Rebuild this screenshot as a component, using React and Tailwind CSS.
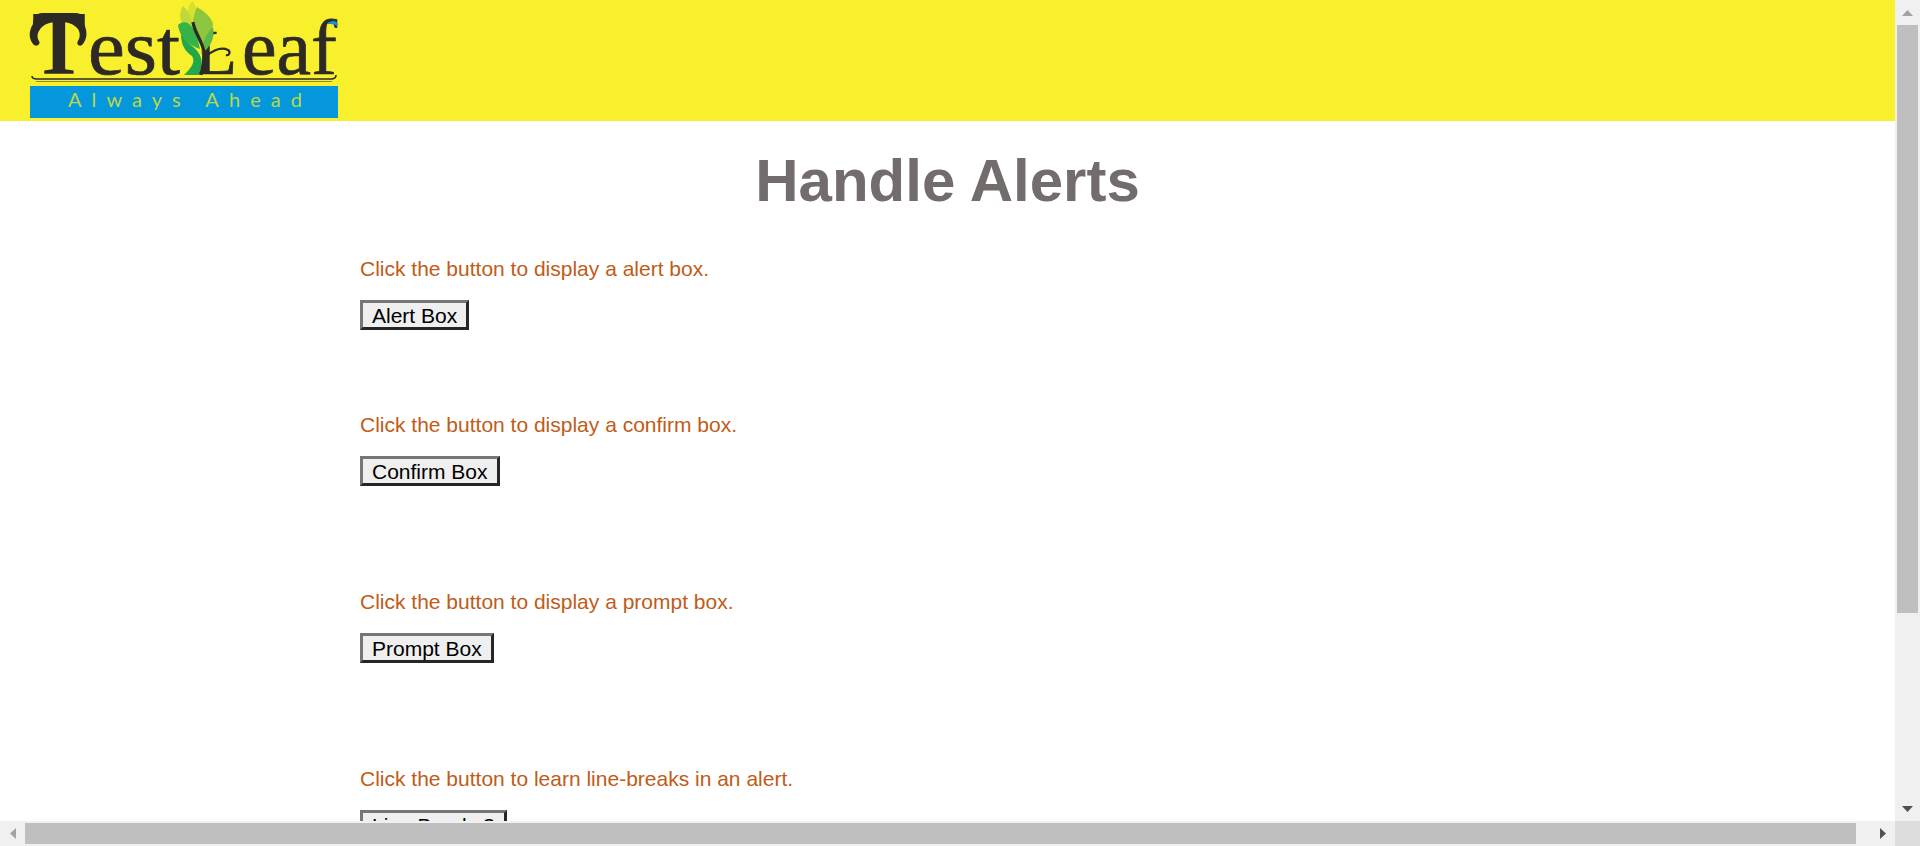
const sections = [
  { id: 'alert', text: 'Click the button to display a alert box.', label: 'Alert Box', gap: 'mb-[83px]' },
  { id: 'confirm', text: 'Click the button to display a confirm box.', label: 'Confirm Box', gap: 'mb-[104px]' },
  { id: 'prompt', text: 'Click the button to display a prompt box.', label: 'Prompt Box', gap: 'mb-[104px]' },
  { id: 'line', text: 'Click the button to learn line-breaks in an alert.', label: 'Line Breaks?', gap: 'mb-[83px]' },
];

function Logo() {
  return (
    <svg width="340" height="121" viewBox="0 0 340 121" className="block shrink-0 overflow-visible">
      {/* wordmark */}
      <g fontFamily="'Liberation Serif', serif" fill="#2d2a26">
        <text x="32" y="74" fontSize="90" textLength="54" lengthAdjust="spacingAndGlyphs" fontWeight="700">T</text>
        <text x="88" y="74" fontSize="78" textLength="92" lengthAdjust="spacingAndGlyphs" stroke="#2d2a26" strokeWidth="0.7">est</text>
        <text x="195" y="74" fontSize="64" textLength="42" lengthAdjust="spacingAndGlyphs" stroke="#2d2a26" strokeWidth="0.7">L</text>
        <text x="242" y="74" fontSize="78" textLength="95" lengthAdjust="spacingAndGlyphs" stroke="#2d2a26" strokeWidth="0.7">eaf</text>
      </g>
      {/* swashes on the T */}
      <path d="M42 13H76C82 13 84 18 84 24C88 32 87 40 82 45C79 47 76 44 78 41C81 36 80 30 76 27C72 23 66 22 60 22C52 22 46 23 42 27C38 31 36 36 39 41C41 44 37 47 34 45C29 40 28 32 33 24C33 18 36 13 42 13Z" fill="#2d2a26" />
      {/* leaf */}
      <path d="M193 1c-6 5-7 12-3 24l5 2c3-10 2-19-2-26z" fill="#d9e02f" />
      <path d="M183 6c-5 8-4 19 8 28 3-10 0-21-8-28z" fill="#bfd93a" />
      <path d="M197 7c7 4 15 11 16 17-1 9-5 17-11 23-5-7-9-14-9-23 0-7 2-13 4-17z" fill="#8cc63f" />
      <path d="M178 25c8-7 15 1 19 11l3 13c-11-4-20-10-22-24z" fill="#35b34a" />
      <path d="M213 27c2 11-2 20-12 27 1-11 5-20 12-27z" fill="#5fb946" />
      <path d="M181 34c6 11 17 13 20 24 2 6-1 12-2 17h-15c7-7 12-13 8-19-6-4-11-10-11-22z" fill="#22a84a" />
      <path d="M193 22c1 10 9 18 11 30 1 8-2 16-3 23" fill="none" stroke="#2d2a26" strokeWidth="3.2" />
      {/* swash on the L */}
      <path d="M204 58c6-6 16-12 24-8 3 2 1 6-2 5" fill="none" stroke="#2d2a26" strokeWidth="2.2" />
      <path d="M327 24c3-3 8-5 11 0l-1 2c-3-2-6-2-10-2z" fill="#0f97dc" />
      {/* rules under the wordmark */}
      <path d="M32 76c0 2 2 3 5 3h294c3 0 5-1 5-4" fill="none" stroke="#2d2a26" strokeWidth="1.6" />
      <rect x="36" y="81" width="296" height="1" fill="#8d8830" />
      {/* tagline band */}
      <rect x="30" y="86" width="308" height="32" fill="#0597dc" />
      <text x="68" y="107" fontFamily="Lato, sans-serif" fontSize="20" fill="#b9d84a" textLength="234" lengthAdjust="spacing">Always Ahead</text>
    </svg>
  );
}

function Triangle({ dir, color }) {
  const points = {
    up: '0,6 5.5,0 11,6',
    down: '0,0 11,0 5.5,6',
    left: '6,0 6,11 0,5.5',
    right: '0,0 0,11 6,5.5',
  };
  const vertical = dir === 'up' || dir === 'down';
  return (
    <svg width={vertical ? 11 : 6} height={vertical ? 6 : 11} fill={color}>
      <polygon points={points[dir]} />
    </svg>
  );
}

export default function App() {
  return (
    <div className="w-[1920px] h-[846px] flex flex-col overflow-hidden bg-white font-['Liberation_Sans',Arial,sans-serif]">
      <div className="flex-1 min-h-0 flex">
        <div className="flex-1 min-w-0 overflow-hidden">
          <header className="h-[121px] bg-[#f8ef2d]">
            <Logo />
          </header>
          <main className="pl-[360px]">
            <h1 className="-ml-[360px] mt-[25px] mb-[42px] text-center text-[60px] leading-[69px] font-bold text-[#736c6c]">
              Handle Alerts
            </h1>
            {sections.map((s) => (
              <section key={s.id} className={s.gap}>
                <p className="mb-[19px] text-[21px] leading-[24px] text-[#bf5c18]">{s.text}</p>
                <button className="block h-[30px] px-[9px] pt-px bg-[#efefef] text-black text-[21px] leading-[24px] border-[3px] border-t-[#767676] border-l-[#767676] border-r-[#262626] border-b-[#262626]">
                  {s.label}
                </button>
              </section>
            ))}
          </main>
        </div>
        <aside className="w-[25px] shrink-0 bg-[#f0f0f0] flex flex-col items-center">
          <div className="h-[25px] flex items-center justify-center">
            <Triangle dir="up" color="#a3a3a3" />
          </div>
          <div className="w-[21px] flex-1 flex flex-col">
            <div className="h-[588px] bg-[#bfbfbf]" />
          </div>
          <div className="h-[25px] flex items-center justify-center">
            <Triangle dir="down" color="#505050" />
          </div>
        </aside>
      </div>
      <div className="h-[25px] shrink-0 flex bg-[#f0f0f0]">
        <div className="w-[25px] flex items-center justify-center">
          <Triangle dir="left" color="#a3a3a3" />
        </div>
        <div className="flex-1 flex items-center">
          <div className="w-[1831px] h-[21px] bg-[#bfbfbf]" />
        </div>
        <div className="w-[25px] flex items-center justify-center">
          <Triangle dir="right" color="#505050" />
        </div>
        <div className="w-[25px] bg-[#dcdcdc]" />
      </div>
    </div>
  );
}
